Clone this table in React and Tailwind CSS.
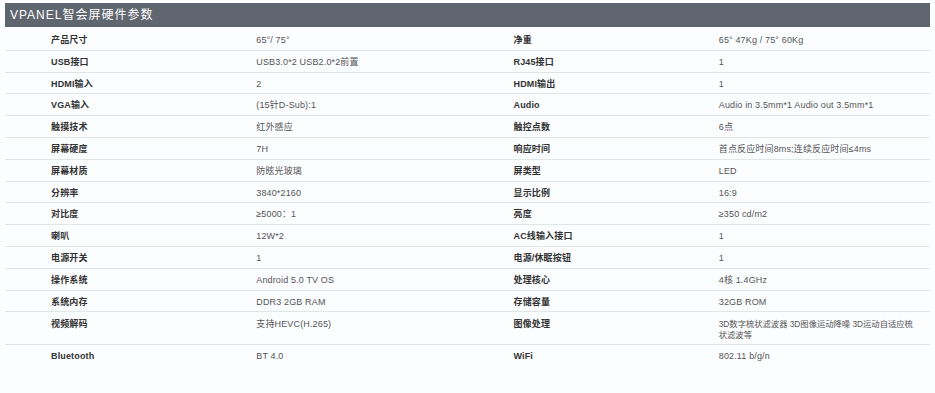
const rows = [
  ['产品尺寸', '65°/ 75°', '净重', '65° 47Kg / 75° 60Kg'],
  ['USB接口', 'USB3.0*2 USB2.0*2前置', 'RJ45接口', '1'],
  ['HDMI输入', '2', 'HDMI输出', '1'],
  ['VGA输入', '(15针D-Sub):1', 'Audio', 'Audio in 3.5mm*1 Audio out 3.5mm*1'],
  ['触摸技术', '红外感应', '触控点数', '6点'],
  ['屏幕硬度', '7H', '响应时间', '首点反应时间8ms;连续反应时间≤4ms'],
  ['屏幕材质', '防眩光玻璃', '屏类型', 'LED'],
  ['分辨率', '3840*2160', '显示比例', '16:9'],
  ['对比度', '≥5000：1', '亮度', '≥350 cd/m2'],
  ['喇叭', '12W*2', 'AC线输入接口', '1'],
  ['电源开关', '1', '电源/休眠按钮', '1'],
  ['操作系统', 'Android 5.0 TV OS', '处理核心', '4核 1.4GHz'],
  ['系统内存', 'DDR3 2GB RAM', '存储容量', '32GB ROM'],
  ['视频解码', '支持HEVC(H.265)', '图像处理', ['3D数字梳状滤波器 3D图像运动降噪 3D运动自适应梳', '状滤波等']],
  ['Bluetooth', 'BT 4.0', 'WiFi', '802.11 b/g/n'],
];

function Value({ v }) {
  if (Array.isArray(v)) {
    return (
      <span className="text-[8.3px] tracking-normal">
        {v[0]}
        <br />
        {v[1]}
      </span>
    );
  }
  return v;
}

export default function App() {
  return (
    <div
      className="min-h-[393px] w-[935px] bg-[#fbfdff] pt-[3px]"
      style={{ fontFamily: '"Liberation Sans", Arial, "Noto Sans CJK SC", sans-serif' }}
    >
      <div className="mx-[5px] h-[24px] bg-[#5f6670] pl-[5px] flex items-center">
        <h2 className="text-[12px] tracking-[1px] text-white leading-none">VPANEL智会屏硬件参数</h2>
      </div>
      <div className="mx-[5px] pt-[2px]">
        {rows.map((r, i) => (
          <div
            key={i}
            className={`grid grid-cols-4 text-[9px] tracking-[0.15px] leading-[11px] whitespace-nowrap ${
              Array.isArray(r[3]) ? 'h-[33px] pt-[7px]' : 'h-[21.8px] pt-[6px]'
            } ${i < rows.length - 1 ? 'border-b border-[#e3e6e9]' : ''}`}
          >
            <div className="pl-[46px] font-bold text-[#333]">{r[0]}</div>
            <div className="pl-[20px] text-[#555]">
              <Value v={r[1]} />
            </div>
            <div className="pl-[46px] font-bold text-[#333]">{r[2]}</div>
            <div className="pl-[20px] text-[#555]">
              <Value v={r[3]} />
            </div>
          </div>
        ))}
      </div>
    </div>
  );
}
